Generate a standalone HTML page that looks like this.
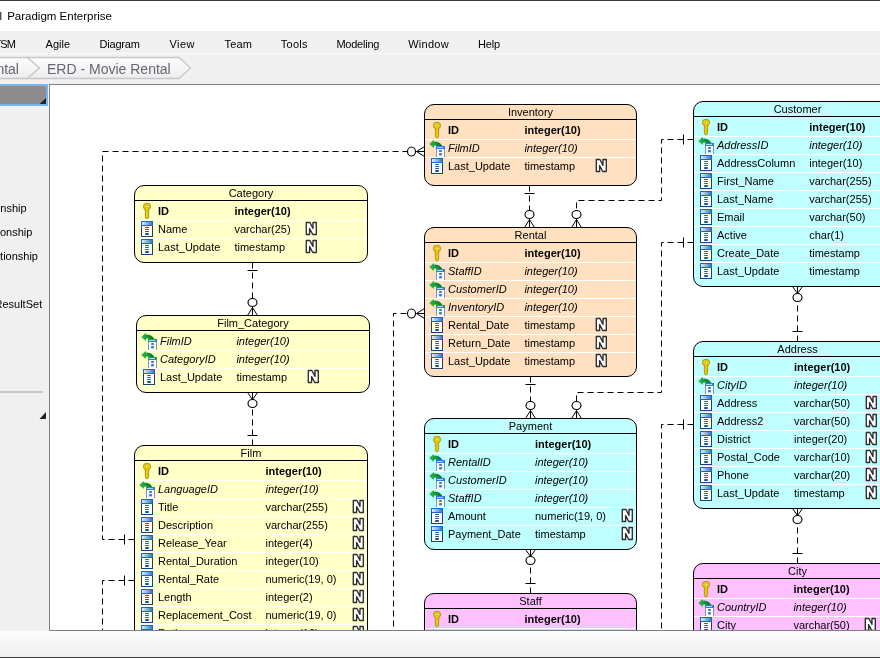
<!DOCTYPE html><html><head><meta charset="utf-8"><style>

*{margin:0;padding:0;box-sizing:content-box}
html,body{width:880px;height:658px;overflow:hidden;background:#fff;font-family:"Liberation Sans", sans-serif}
.tb,svg{will-change:transform}
#top{position:absolute;left:0;top:0;width:880px;height:1px;background:#3c3c3c}
#title{position:absolute;left:0;top:1px;width:880px;height:30px;background:#fff}
#title span{position:absolute;left:-3px;top:8px;font-size:12.5px;color:#000;white-space:nowrap}
#menu{position:absolute;left:0;top:31px;width:880px;height:22px;background:#f0f0f0}
#menu span{position:absolute;top:6px;font-size:11.5px;color:#000;white-space:nowrap}
#crumbbar{position:absolute;left:0;top:53px;width:880px;height:30px;background:#f0f0f0;border-top:1px solid #fafafa}
#left{position:absolute;left:0;top:84px;width:49px;height:547px;background:#f0f0f0}
#canvas{position:absolute;left:49px;top:84px;width:831px;height:545px;border-left:1px solid #7b828a;border-top:1px solid #7b828a;border-bottom:1px solid #7b828a;background:#fff;overflow:hidden}
#status{position:absolute;left:0;top:631px;width:880px;height:26px;background:linear-gradient(#fcfcfc,#f0f0f0)}
#bot{position:absolute;left:0;top:657px;width:880px;height:1px;background:#3c3c3c}
.tb{position:absolute;border:1px solid #000;border-radius:10px;overflow:hidden}
.hd{position:absolute;left:0;top:0;width:100%;height:14px;border-bottom:1px solid #000;text-align:center;font-size:11px;line-height:14px;color:#000}
.sep{position:absolute;left:0;width:100%;height:1px;background:#fff}
.t{position:absolute;font-size:11px;line-height:17px;color:#000;white-space:nowrap}
.t.b{font-weight:bold}
.t.i{font-style:italic}
.ic{position:absolute}
svg.cn{position:absolute;left:0;top:0}
.dl{fill:none;stroke:#000;stroke-width:1;stroke-dasharray:6 4}
.sl{fill:none;stroke:#000;stroke-width:1}
.ci{fill:#fff;stroke:#000;stroke-width:1.15}

</style></head><body>
<svg width="0" height="0" style="position:absolute">
<defs>
<linearGradient id="gold" x1="0" x2="1" y1="0" y2="0"><stop offset="0" stop-color="#f7d84a"/><stop offset="1" stop-color="#e0b000"/></linearGradient>
<linearGradient id="blu" x1="0" x2="1" y1="0" y2="0"><stop offset="0" stop-color="#e2eefa"/><stop offset="1" stop-color="#3a78d0"/></linearGradient>
<linearGradient id="grn" x1="0" x2="1" y1="0" y2="0"><stop offset="0" stop-color="#30c050"/><stop offset="0.6" stop-color="#0e8a30"/><stop offset="1" stop-color="#0a6e26"/></linearGradient>
</defs></svg>
<div id="top"></div><div id="title"></div><div id="menu"></div><div id="crumbbar"></div><div id="left"></div>
<svg style="position:absolute;left:0;top:0" width="880" height="84"><defs><linearGradient id="crg" x1="0" x2="0" y1="0" y2="1"><stop offset="0" stop-color="#fdfdfd"/><stop offset="1" stop-color="#ececec"/></linearGradient></defs><text x="-0.6" y="19.5" font-size="11.5" fill="#000" font-family="Liberation Sans">l</text><text x="7.2" y="19.5" font-size="11.5" fill="#000" font-family="Liberation Sans">Paradigm Enterprise</text><text x="-5.6" y="48" font-size="11" textLength="21.6" fill="#000" font-family="Liberation Sans">TSM</text><text x="45.6" y="48" font-size="11" textLength="24.5" fill="#000" font-family="Liberation Sans">Agile</text><text x="99.6" y="48" font-size="11" textLength="40.2" fill="#000" font-family="Liberation Sans">Diagram</text><text x="169.4" y="48" font-size="11" textLength="25" fill="#000" font-family="Liberation Sans">View</text><text x="224.6" y="48" font-size="11" textLength="27.3" fill="#000" font-family="Liberation Sans">Team</text><text x="280.8" y="48" font-size="11" textLength="26.8" fill="#000" font-family="Liberation Sans">Tools</text><text x="336.4" y="48" font-size="11" textLength="43" fill="#000" font-family="Liberation Sans">Modeling</text><text x="408.2" y="48" font-size="11" textLength="40.4" fill="#000" font-family="Liberation Sans">Window</text><text x="478" y="48" font-size="11" textLength="22" fill="#000" font-family="Liberation Sans">Help</text><path d="M-10,57.5 H27.5 L39.5,68 L27.5,78.5 H-10 Z" fill="url(#crg)" stroke="#c6c8cb" stroke-width="1.3"/><path d="M27.5,57.5 H179 L190.5,68 L179,78.5 H27.5 L39.5,68 Z" fill="url(#crg)" stroke="#c6c8cb" stroke-width="1.3"/><text x="-3.6" y="74" font-size="14" fill="#666676" font-family="Liberation Sans">ntal</text><text x="47" y="74" font-size="14" fill="#666676" font-family="Liberation Sans">ERD - Movie Rental</text></svg><svg style="position:absolute;left:0;top:84px" width="49" height="547"><rect x="0" y="0" width="48" height="22" fill="#78b4f0"/><rect x="0" y="2" width="46" height="18" fill="#8c8c8c"/><path d="M46,14 L46,20 L39.5,20 Z" fill="#222"/><text x="26.6" y="127.6" text-anchor="end" font-size="11" fill="#000" font-family="Liberation Sans">nship</text><text x="32.3" y="152" text-anchor="end" font-size="11" fill="#000" font-family="Liberation Sans">onship</text><text x="38" y="176" text-anchor="end" font-size="11" fill="#000" font-family="Liberation Sans">ationship</text><text x="42.2" y="224" text-anchor="end" font-size="11" fill="#000" font-family="Liberation Sans">ResultSet</text><rect x="0" y="307" width="43" height="2" fill="#c8c8c8"/><path d="M46,328 L46,335 L39.5,335 Z" fill="#222"/></svg>
<div id="canvas">
<svg class="cn" width="831" height="545"><path d="M84.5,454.5 L52.5,454.5 L52.5,66.5 L358.5,66.5" class="dl"/>
<path d="M84.5,495.5 L52.5,495.5 L52.5,555.5" class="dl"/>
<path d="M202.5,177.5 L202.5,215.5" class="dl"/>
<path d="M202.5,360.5 L202.5,322.5" class="dl"/>
<path d="M479.5,100.5 L479.5,127.5" class="dl"/>
<path d="M643.5,54.5 L611.5,54.5 L611.5,115.5 L526.5,115.5 L526.5,127.5" class="dl"/>
<path d="M366.5,228.5 L343.5,228.5 L343.5,555.5" class="dl"/>
<path d="M480.5,291.5 L480.5,318.5" class="dl"/>
<path d="M643.5,157.5 L611.5,157.5 L611.5,307.5 L526.5,307.5 L526.5,318.5" class="dl"/>
<path d="M747.5,256.5 L747.5,216.5" class="dl"/>
<path d="M643.5,339.5 L611.5,339.5 L611.5,555.5" class="dl"/>
<path d="M747.5,478.5 L747.5,438.5" class="dl"/>
<path d="M480.5,508.5 L480.5,479.5" class="dl"/>
<path d="M74.5,449.5 V459.5" class="sl"/>
<path d="M74.5,490.5 V500.5" class="sl"/>
<path d="M197.5,185.5 H207.5" class="sl"/>
<path d="M197.5,350.5 H207.5" class="sl"/>
<path d="M474.5,108.5 H484.5" class="sl"/>
<path d="M633.5,49.5 V59.5" class="sl"/>
<path d="M475.5,299.5 H485.5" class="sl"/>
<path d="M633.5,152.5 V162.5" class="sl"/>
<path d="M742.5,246.5 H752.5" class="sl"/>
<path d="M633.5,334.5 V344.5" class="sl"/>
<path d="M742.5,468.5 H752.5" class="sl"/>
<path d="M475.5,498.5 H485.5" class="sl"/>
<path d="M366.5,66.5 L374.5,61.5 M366.5,66.5 L374.5,71.5 M366.5,66.5 H374.5" class="sl"/>
<ellipse cx="361.5" cy="66.5" rx="4" ry="4.5" class="ci"/>
<path d="M479.5,134.5 L474.5,142.5 M479.5,134.5 L484.5,142.5 M479.5,134.5 V142.5" class="sl"/>
<ellipse cx="479.5" cy="129.5" rx="4.5" ry="4" class="ci"/>
<path d="M526.5,134.5 L521.5,142.5 M526.5,134.5 L531.5,142.5 M526.5,134.5 V142.5" class="sl"/>
<ellipse cx="526.5" cy="129.5" rx="4.5" ry="4" class="ci"/>
<path d="M366.5,228.5 L374.5,223.5 M366.5,228.5 L374.5,233.5 M366.5,228.5 H374.5" class="sl"/>
<ellipse cx="361.5" cy="228.5" rx="4" ry="4.5" class="ci"/>
<path d="M480.5,325.5 L475.5,333.5 M480.5,325.5 L485.5,333.5 M480.5,325.5 V333.5" class="sl"/>
<ellipse cx="480.5" cy="320.5" rx="4.5" ry="4" class="ci"/>
<path d="M526.5,325.5 L521.5,333.5 M526.5,325.5 L531.5,333.5 M526.5,325.5 V333.5" class="sl"/>
<ellipse cx="526.5" cy="320.5" rx="4.5" ry="4" class="ci"/>
<path d="M202.5,222.5 L197.5,230.5 M202.5,222.5 L207.5,230.5 M202.5,222.5 V230.5" class="sl"/>
<ellipse cx="202.5" cy="217.5" rx="4.5" ry="4" class="ci"/>
<path d="M202.5,314.5 L197.5,307.5 M202.5,314.5 L207.5,307.5 M202.5,314.5 V307.5" class="sl"/>
<ellipse cx="202.5" cy="318.5" rx="4.5" ry="4" class="ci"/>
<path d="M747.5,208.5 L742.5,201.5 M747.5,208.5 L752.5,201.5 M747.5,208.5 V201.5" class="sl"/>
<ellipse cx="747.5" cy="212.5" rx="4.5" ry="4" class="ci"/>
<path d="M747.5,430.5 L742.5,423.5 M747.5,430.5 L752.5,423.5 M747.5,430.5 V423.5" class="sl"/>
<ellipse cx="747.5" cy="434.5" rx="4.5" ry="4" class="ci"/>
<path d="M480.5,471.5 L475.5,464.5 M480.5,471.5 L485.5,464.5 M480.5,471.5 V464.5" class="sl"/>
<ellipse cx="480.5" cy="475.5" rx="4.5" ry="4" class="ci"/></svg>
<div class="tb" style="left:374px;top:19px;width:211px;height:80px;background:#ffe0c0">
<div class="hd">Inventory</div>
<svg class="ic" style="left:8px;top:17px" width="9" height="17" viewBox="0 0 9 17"> <path d="M2.3,6.2 L5.7,6.2 L5.6,13.8 L4.8,15.7 L3.2,15.7 L2.4,13.8 Z" fill="#f0c800" stroke="#a08410" stroke-width="0.8"/> <ellipse cx="4" cy="3.5" rx="3.6" ry="3.3" fill="#f6d400" stroke="#a08410" stroke-width="0.9"/> <rect x="3" y="6" width="2" height="1.3" fill="#f0c800"/> <ellipse cx="4" cy="3.3" rx="1.4" ry="1.05" fill="#fff" stroke="#b09018" stroke-width="0.6"/></svg>
<div class="t b" style="left:23px;top:17px">ID</div>
<div class="t b" style="left:99.4px;top:17px">integer(10)</div>
<div class="sep" style="top:34px"></div>
<svg class="ic" style="left:4px;top:34px" width="17" height="18" viewBox="0 0 17 18"> <path d="M0.2,5 L4.8,0.9 L4.8,2.7 Q11,1.7 14.4,9 L11.8,9.2 Q9.4,5.9 4.8,6.7 L4.8,9 Z" fill="url(#grn)"/> <rect x="7" y="7" width="9" height="11" fill="#fff"/> <rect x="7" y="10" width="1" height="8" fill="#8095b5"/> <rect x="15" y="10" width="1" height="8" fill="#8095b5"/> <rect x="7" y="7" width="9" height="3" fill="#2a7ee0"/> <rect x="8" y="8" width="6" height="1" fill="#b8d4f4"/> <rect x="10" y="11" width="3" height="2" rx="0.8" fill="#3a7ec4"/> <rect x="10" y="14" width="3" height="2.5" rx="0.8" fill="#3a7ec4"/></svg>
<div class="t i" style="left:23px;top:35px">FilmID</div>
<div class="t i" style="left:99.4px;top:35px">integer(10)</div>
<div class="sep" style="top:52px"></div>
<svg class="ic" style="left:6px;top:53px" width="12" height="16" viewBox="0 0 12 16"> <rect x="0" y="0" width="12" height="16" fill="#1b3f70"/> <rect x="0" y="0" width="12" height="5" fill="#1466d8"/> <rect x="1" y="1" width="10" height="3" fill="url(#blu)"/> <rect x="1" y="5" width="10" height="10" fill="#fff"/> <rect x="4" y="6" width="4" height="1" rx="0.5" fill="#1a64b0"/> <rect x="4" y="8" width="4" height="1" rx="0.5" fill="#1a64b0"/> <rect x="4" y="10" width="4" height="1" rx="0.5" fill="#1a64b0"/> <rect x="4" y="12" width="4" height="2" rx="1" fill="#0d5498"/></svg>
<div class="t " style="left:23px;top:53px">Last_Update</div>
<div class="t " style="left:99.4px;top:53px">timestamp</div>
<svg class="ic" style="left:170px;top:53px" width="13" height="15" viewBox="0 0 13 15"> <path d="M1.3,1.5 L4.9,1.5 L8,7.4 L8,1.5 L11.3,1.5 L11.3,13.5 L7.8,13.5 L4.6,7.6 L4.6,13.5 L1.3,13.5 Z" fill="#fff" stroke="#2e2e2e" stroke-width="1.35" stroke-linejoin="round"/></svg>
</div>
<div class="tb" style="left:643px;top:16px;width:207px;height:184px;background:#c0ffff">
<div class="hd">Customer</div>
<svg class="ic" style="left:8px;top:17px" width="9" height="17" viewBox="0 0 9 17"> <path d="M2.3,6.2 L5.7,6.2 L5.6,13.8 L4.8,15.7 L3.2,15.7 L2.4,13.8 Z" fill="#f0c800" stroke="#a08410" stroke-width="0.8"/> <ellipse cx="4" cy="3.5" rx="3.6" ry="3.3" fill="#f6d400" stroke="#a08410" stroke-width="0.9"/> <rect x="3" y="6" width="2" height="1.3" fill="#f0c800"/> <ellipse cx="4" cy="3.3" rx="1.4" ry="1.05" fill="#fff" stroke="#b09018" stroke-width="0.6"/></svg>
<div class="t b" style="left:23px;top:17px">ID</div>
<div class="t b" style="left:115.2px;top:17px">integer(10)</div>
<div class="sep" style="top:34px"></div>
<svg class="ic" style="left:4px;top:34px" width="17" height="18" viewBox="0 0 17 18"> <path d="M0.2,5 L4.8,0.9 L4.8,2.7 Q11,1.7 14.4,9 L11.8,9.2 Q9.4,5.9 4.8,6.7 L4.8,9 Z" fill="url(#grn)"/> <rect x="7" y="7" width="9" height="11" fill="#fff"/> <rect x="7" y="10" width="1" height="8" fill="#8095b5"/> <rect x="15" y="10" width="1" height="8" fill="#8095b5"/> <rect x="7" y="7" width="9" height="3" fill="#2a7ee0"/> <rect x="8" y="8" width="6" height="1" fill="#b8d4f4"/> <rect x="10" y="11" width="3" height="2" rx="0.8" fill="#3a7ec4"/> <rect x="10" y="14" width="3" height="2.5" rx="0.8" fill="#3a7ec4"/></svg>
<div class="t i" style="left:23px;top:35px">AddressID</div>
<div class="t i" style="left:115.2px;top:35px">integer(10)</div>
<div class="sep" style="top:52px"></div>
<svg class="ic" style="left:6px;top:53px" width="12" height="16" viewBox="0 0 12 16"> <rect x="0" y="0" width="12" height="16" fill="#1b3f70"/> <rect x="0" y="0" width="12" height="5" fill="#1466d8"/> <rect x="1" y="1" width="10" height="3" fill="url(#blu)"/> <rect x="1" y="5" width="10" height="10" fill="#fff"/> <rect x="4" y="6" width="4" height="1" rx="0.5" fill="#1a64b0"/> <rect x="4" y="8" width="4" height="1" rx="0.5" fill="#1a64b0"/> <rect x="4" y="10" width="4" height="1" rx="0.5" fill="#1a64b0"/> <rect x="4" y="12" width="4" height="2" rx="1" fill="#0d5498"/></svg>
<div class="t " style="left:23px;top:53px">AddressColumn</div>
<div class="t " style="left:115.2px;top:53px">integer(10)</div>
<div class="sep" style="top:70px"></div>
<svg class="ic" style="left:6px;top:71px" width="12" height="16" viewBox="0 0 12 16"> <rect x="0" y="0" width="12" height="16" fill="#1b3f70"/> <rect x="0" y="0" width="12" height="5" fill="#1466d8"/> <rect x="1" y="1" width="10" height="3" fill="url(#blu)"/> <rect x="1" y="5" width="10" height="10" fill="#fff"/> <rect x="4" y="6" width="4" height="1" rx="0.5" fill="#1a64b0"/> <rect x="4" y="8" width="4" height="1" rx="0.5" fill="#1a64b0"/> <rect x="4" y="10" width="4" height="1" rx="0.5" fill="#1a64b0"/> <rect x="4" y="12" width="4" height="2" rx="1" fill="#0d5498"/></svg>
<div class="t " style="left:23px;top:71px">First_Name</div>
<div class="t " style="left:115.2px;top:71px">varchar(255)</div>
<div class="sep" style="top:88px"></div>
<svg class="ic" style="left:6px;top:89px" width="12" height="16" viewBox="0 0 12 16"> <rect x="0" y="0" width="12" height="16" fill="#1b3f70"/> <rect x="0" y="0" width="12" height="5" fill="#1466d8"/> <rect x="1" y="1" width="10" height="3" fill="url(#blu)"/> <rect x="1" y="5" width="10" height="10" fill="#fff"/> <rect x="4" y="6" width="4" height="1" rx="0.5" fill="#1a64b0"/> <rect x="4" y="8" width="4" height="1" rx="0.5" fill="#1a64b0"/> <rect x="4" y="10" width="4" height="1" rx="0.5" fill="#1a64b0"/> <rect x="4" y="12" width="4" height="2" rx="1" fill="#0d5498"/></svg>
<div class="t " style="left:23px;top:89px">Last_Name</div>
<div class="t " style="left:115.2px;top:89px">varchar(255)</div>
<div class="sep" style="top:106px"></div>
<svg class="ic" style="left:6px;top:107px" width="12" height="16" viewBox="0 0 12 16"> <rect x="0" y="0" width="12" height="16" fill="#1b3f70"/> <rect x="0" y="0" width="12" height="5" fill="#1466d8"/> <rect x="1" y="1" width="10" height="3" fill="url(#blu)"/> <rect x="1" y="5" width="10" height="10" fill="#fff"/> <rect x="4" y="6" width="4" height="1" rx="0.5" fill="#1a64b0"/> <rect x="4" y="8" width="4" height="1" rx="0.5" fill="#1a64b0"/> <rect x="4" y="10" width="4" height="1" rx="0.5" fill="#1a64b0"/> <rect x="4" y="12" width="4" height="2" rx="1" fill="#0d5498"/></svg>
<div class="t " style="left:23px;top:107px">Email</div>
<div class="t " style="left:115.2px;top:107px">varchar(50)</div>
<div class="sep" style="top:124px"></div>
<svg class="ic" style="left:6px;top:125px" width="12" height="16" viewBox="0 0 12 16"> <rect x="0" y="0" width="12" height="16" fill="#1b3f70"/> <rect x="0" y="0" width="12" height="5" fill="#1466d8"/> <rect x="1" y="1" width="10" height="3" fill="url(#blu)"/> <rect x="1" y="5" width="10" height="10" fill="#fff"/> <rect x="4" y="6" width="4" height="1" rx="0.5" fill="#1a64b0"/> <rect x="4" y="8" width="4" height="1" rx="0.5" fill="#1a64b0"/> <rect x="4" y="10" width="4" height="1" rx="0.5" fill="#1a64b0"/> <rect x="4" y="12" width="4" height="2" rx="1" fill="#0d5498"/></svg>
<div class="t " style="left:23px;top:125px">Active</div>
<div class="t " style="left:115.2px;top:125px">char(1)</div>
<div class="sep" style="top:142px"></div>
<svg class="ic" style="left:6px;top:143px" width="12" height="16" viewBox="0 0 12 16"> <rect x="0" y="0" width="12" height="16" fill="#1b3f70"/> <rect x="0" y="0" width="12" height="5" fill="#1466d8"/> <rect x="1" y="1" width="10" height="3" fill="url(#blu)"/> <rect x="1" y="5" width="10" height="10" fill="#fff"/> <rect x="4" y="6" width="4" height="1" rx="0.5" fill="#1a64b0"/> <rect x="4" y="8" width="4" height="1" rx="0.5" fill="#1a64b0"/> <rect x="4" y="10" width="4" height="1" rx="0.5" fill="#1a64b0"/> <rect x="4" y="12" width="4" height="2" rx="1" fill="#0d5498"/></svg>
<div class="t " style="left:23px;top:143px">Create_Date</div>
<div class="t " style="left:115.2px;top:143px">timestamp</div>
<div class="sep" style="top:160px"></div>
<svg class="ic" style="left:6px;top:161px" width="12" height="16" viewBox="0 0 12 16"> <rect x="0" y="0" width="12" height="16" fill="#1b3f70"/> <rect x="0" y="0" width="12" height="5" fill="#1466d8"/> <rect x="1" y="1" width="10" height="3" fill="url(#blu)"/> <rect x="1" y="5" width="10" height="10" fill="#fff"/> <rect x="4" y="6" width="4" height="1" rx="0.5" fill="#1a64b0"/> <rect x="4" y="8" width="4" height="1" rx="0.5" fill="#1a64b0"/> <rect x="4" y="10" width="4" height="1" rx="0.5" fill="#1a64b0"/> <rect x="4" y="12" width="4" height="2" rx="1" fill="#0d5498"/></svg>
<div class="t " style="left:23px;top:161px">Last_Update</div>
<div class="t " style="left:115.2px;top:161px">timestamp</div>
</div>
<div class="tb" style="left:84px;top:100px;width:232px;height:76px;background:#ffffc8">
<div class="hd">Category</div>
<svg class="ic" style="left:8px;top:17px" width="9" height="17" viewBox="0 0 9 17"> <path d="M2.3,6.2 L5.7,6.2 L5.6,13.8 L4.8,15.7 L3.2,15.7 L2.4,13.8 Z" fill="#f0c800" stroke="#a08410" stroke-width="0.8"/> <ellipse cx="4" cy="3.5" rx="3.6" ry="3.3" fill="#f6d400" stroke="#a08410" stroke-width="0.9"/> <rect x="3" y="6" width="2" height="1.3" fill="#f0c800"/> <ellipse cx="4" cy="3.3" rx="1.4" ry="1.05" fill="#fff" stroke="#b09018" stroke-width="0.6"/></svg>
<div class="t b" style="left:23px;top:17px">ID</div>
<div class="t b" style="left:99.4px;top:17px">integer(10)</div>
<div class="sep" style="top:34px"></div>
<svg class="ic" style="left:6px;top:35px" width="12" height="16" viewBox="0 0 12 16"> <rect x="0" y="0" width="12" height="16" fill="#1b3f70"/> <rect x="0" y="0" width="12" height="5" fill="#1466d8"/> <rect x="1" y="1" width="10" height="3" fill="url(#blu)"/> <rect x="1" y="5" width="10" height="10" fill="#fff"/> <rect x="4" y="6" width="4" height="1" rx="0.5" fill="#1a64b0"/> <rect x="4" y="8" width="4" height="1" rx="0.5" fill="#1a64b0"/> <rect x="4" y="10" width="4" height="1" rx="0.5" fill="#1a64b0"/> <rect x="4" y="12" width="4" height="2" rx="1" fill="#0d5498"/></svg>
<div class="t " style="left:23px;top:35px">Name</div>
<div class="t " style="left:99.4px;top:35px">varchar(25)</div>
<svg class="ic" style="left:170px;top:35px" width="13" height="15" viewBox="0 0 13 15"> <path d="M1.3,1.5 L4.9,1.5 L8,7.4 L8,1.5 L11.3,1.5 L11.3,13.5 L7.8,13.5 L4.6,7.6 L4.6,13.5 L1.3,13.5 Z" fill="#fff" stroke="#2e2e2e" stroke-width="1.35" stroke-linejoin="round"/></svg>
<div class="sep" style="top:52px"></div>
<svg class="ic" style="left:6px;top:53px" width="12" height="16" viewBox="0 0 12 16"> <rect x="0" y="0" width="12" height="16" fill="#1b3f70"/> <rect x="0" y="0" width="12" height="5" fill="#1466d8"/> <rect x="1" y="1" width="10" height="3" fill="url(#blu)"/> <rect x="1" y="5" width="10" height="10" fill="#fff"/> <rect x="4" y="6" width="4" height="1" rx="0.5" fill="#1a64b0"/> <rect x="4" y="8" width="4" height="1" rx="0.5" fill="#1a64b0"/> <rect x="4" y="10" width="4" height="1" rx="0.5" fill="#1a64b0"/> <rect x="4" y="12" width="4" height="2" rx="1" fill="#0d5498"/></svg>
<div class="t " style="left:23px;top:53px">Last_Update</div>
<div class="t " style="left:99.4px;top:53px">timestamp</div>
<svg class="ic" style="left:170px;top:53px" width="13" height="15" viewBox="0 0 13 15"> <path d="M1.3,1.5 L4.9,1.5 L8,7.4 L8,1.5 L11.3,1.5 L11.3,13.5 L7.8,13.5 L4.6,7.6 L4.6,13.5 L1.3,13.5 Z" fill="#fff" stroke="#2e2e2e" stroke-width="1.35" stroke-linejoin="round"/></svg>
</div>
<div class="tb" style="left:374px;top:142px;width:211px;height:148px;background:#ffe0c0">
<div class="hd">Rental</div>
<svg class="ic" style="left:8px;top:17px" width="9" height="17" viewBox="0 0 9 17"> <path d="M2.3,6.2 L5.7,6.2 L5.6,13.8 L4.8,15.7 L3.2,15.7 L2.4,13.8 Z" fill="#f0c800" stroke="#a08410" stroke-width="0.8"/> <ellipse cx="4" cy="3.5" rx="3.6" ry="3.3" fill="#f6d400" stroke="#a08410" stroke-width="0.9"/> <rect x="3" y="6" width="2" height="1.3" fill="#f0c800"/> <ellipse cx="4" cy="3.3" rx="1.4" ry="1.05" fill="#fff" stroke="#b09018" stroke-width="0.6"/></svg>
<div class="t b" style="left:23px;top:17px">ID</div>
<div class="t b" style="left:99.4px;top:17px">integer(10)</div>
<div class="sep" style="top:34px"></div>
<svg class="ic" style="left:4px;top:34px" width="17" height="18" viewBox="0 0 17 18"> <path d="M0.2,5 L4.8,0.9 L4.8,2.7 Q11,1.7 14.4,9 L11.8,9.2 Q9.4,5.9 4.8,6.7 L4.8,9 Z" fill="url(#grn)"/> <rect x="7" y="7" width="9" height="11" fill="#fff"/> <rect x="7" y="10" width="1" height="8" fill="#8095b5"/> <rect x="15" y="10" width="1" height="8" fill="#8095b5"/> <rect x="7" y="7" width="9" height="3" fill="#2a7ee0"/> <rect x="8" y="8" width="6" height="1" fill="#b8d4f4"/> <rect x="10" y="11" width="3" height="2" rx="0.8" fill="#3a7ec4"/> <rect x="10" y="14" width="3" height="2.5" rx="0.8" fill="#3a7ec4"/></svg>
<div class="t i" style="left:23px;top:35px">StaffID</div>
<div class="t i" style="left:99.4px;top:35px">integer(10)</div>
<div class="sep" style="top:52px"></div>
<svg class="ic" style="left:4px;top:52px" width="17" height="18" viewBox="0 0 17 18"> <path d="M0.2,5 L4.8,0.9 L4.8,2.7 Q11,1.7 14.4,9 L11.8,9.2 Q9.4,5.9 4.8,6.7 L4.8,9 Z" fill="url(#grn)"/> <rect x="7" y="7" width="9" height="11" fill="#fff"/> <rect x="7" y="10" width="1" height="8" fill="#8095b5"/> <rect x="15" y="10" width="1" height="8" fill="#8095b5"/> <rect x="7" y="7" width="9" height="3" fill="#2a7ee0"/> <rect x="8" y="8" width="6" height="1" fill="#b8d4f4"/> <rect x="10" y="11" width="3" height="2" rx="0.8" fill="#3a7ec4"/> <rect x="10" y="14" width="3" height="2.5" rx="0.8" fill="#3a7ec4"/></svg>
<div class="t i" style="left:23px;top:53px">CustomerID</div>
<div class="t i" style="left:99.4px;top:53px">integer(10)</div>
<div class="sep" style="top:70px"></div>
<svg class="ic" style="left:4px;top:70px" width="17" height="18" viewBox="0 0 17 18"> <path d="M0.2,5 L4.8,0.9 L4.8,2.7 Q11,1.7 14.4,9 L11.8,9.2 Q9.4,5.9 4.8,6.7 L4.8,9 Z" fill="url(#grn)"/> <rect x="7" y="7" width="9" height="11" fill="#fff"/> <rect x="7" y="10" width="1" height="8" fill="#8095b5"/> <rect x="15" y="10" width="1" height="8" fill="#8095b5"/> <rect x="7" y="7" width="9" height="3" fill="#2a7ee0"/> <rect x="8" y="8" width="6" height="1" fill="#b8d4f4"/> <rect x="10" y="11" width="3" height="2" rx="0.8" fill="#3a7ec4"/> <rect x="10" y="14" width="3" height="2.5" rx="0.8" fill="#3a7ec4"/></svg>
<div class="t i" style="left:23px;top:71px">InventoryID</div>
<div class="t i" style="left:99.4px;top:71px">integer(10)</div>
<div class="sep" style="top:88px"></div>
<svg class="ic" style="left:6px;top:89px" width="12" height="16" viewBox="0 0 12 16"> <rect x="0" y="0" width="12" height="16" fill="#1b3f70"/> <rect x="0" y="0" width="12" height="5" fill="#1466d8"/> <rect x="1" y="1" width="10" height="3" fill="url(#blu)"/> <rect x="1" y="5" width="10" height="10" fill="#fff"/> <rect x="4" y="6" width="4" height="1" rx="0.5" fill="#1a64b0"/> <rect x="4" y="8" width="4" height="1" rx="0.5" fill="#1a64b0"/> <rect x="4" y="10" width="4" height="1" rx="0.5" fill="#1a64b0"/> <rect x="4" y="12" width="4" height="2" rx="1" fill="#0d5498"/></svg>
<div class="t " style="left:23px;top:89px">Rental_Date</div>
<div class="t " style="left:99.4px;top:89px">timestamp</div>
<svg class="ic" style="left:170px;top:89px" width="13" height="15" viewBox="0 0 13 15"> <path d="M1.3,1.5 L4.9,1.5 L8,7.4 L8,1.5 L11.3,1.5 L11.3,13.5 L7.8,13.5 L4.6,7.6 L4.6,13.5 L1.3,13.5 Z" fill="#fff" stroke="#2e2e2e" stroke-width="1.35" stroke-linejoin="round"/></svg>
<div class="sep" style="top:106px"></div>
<svg class="ic" style="left:6px;top:107px" width="12" height="16" viewBox="0 0 12 16"> <rect x="0" y="0" width="12" height="16" fill="#1b3f70"/> <rect x="0" y="0" width="12" height="5" fill="#1466d8"/> <rect x="1" y="1" width="10" height="3" fill="url(#blu)"/> <rect x="1" y="5" width="10" height="10" fill="#fff"/> <rect x="4" y="6" width="4" height="1" rx="0.5" fill="#1a64b0"/> <rect x="4" y="8" width="4" height="1" rx="0.5" fill="#1a64b0"/> <rect x="4" y="10" width="4" height="1" rx="0.5" fill="#1a64b0"/> <rect x="4" y="12" width="4" height="2" rx="1" fill="#0d5498"/></svg>
<div class="t " style="left:23px;top:107px">Return_Date</div>
<div class="t " style="left:99.4px;top:107px">timestamp</div>
<svg class="ic" style="left:170px;top:107px" width="13" height="15" viewBox="0 0 13 15"> <path d="M1.3,1.5 L4.9,1.5 L8,7.4 L8,1.5 L11.3,1.5 L11.3,13.5 L7.8,13.5 L4.6,7.6 L4.6,13.5 L1.3,13.5 Z" fill="#fff" stroke="#2e2e2e" stroke-width="1.35" stroke-linejoin="round"/></svg>
<div class="sep" style="top:124px"></div>
<svg class="ic" style="left:6px;top:125px" width="12" height="16" viewBox="0 0 12 16"> <rect x="0" y="0" width="12" height="16" fill="#1b3f70"/> <rect x="0" y="0" width="12" height="5" fill="#1466d8"/> <rect x="1" y="1" width="10" height="3" fill="url(#blu)"/> <rect x="1" y="5" width="10" height="10" fill="#fff"/> <rect x="4" y="6" width="4" height="1" rx="0.5" fill="#1a64b0"/> <rect x="4" y="8" width="4" height="1" rx="0.5" fill="#1a64b0"/> <rect x="4" y="10" width="4" height="1" rx="0.5" fill="#1a64b0"/> <rect x="4" y="12" width="4" height="2" rx="1" fill="#0d5498"/></svg>
<div class="t " style="left:23px;top:125px">Last_Update</div>
<div class="t " style="left:99.4px;top:125px">timestamp</div>
<svg class="ic" style="left:170px;top:125px" width="13" height="15" viewBox="0 0 13 15"> <path d="M1.3,1.5 L4.9,1.5 L8,7.4 L8,1.5 L11.3,1.5 L11.3,13.5 L7.8,13.5 L4.6,7.6 L4.6,13.5 L1.3,13.5 Z" fill="#fff" stroke="#2e2e2e" stroke-width="1.35" stroke-linejoin="round"/></svg>
</div>
<div class="tb" style="left:86px;top:230px;width:232px;height:76px;background:#ffffc8">
<div class="hd">Film_Category</div>
<svg class="ic" style="left:4px;top:16px" width="17" height="18" viewBox="0 0 17 18"> <path d="M0.2,5 L4.8,0.9 L4.8,2.7 Q11,1.7 14.4,9 L11.8,9.2 Q9.4,5.9 4.8,6.7 L4.8,9 Z" fill="url(#grn)"/> <rect x="7" y="7" width="9" height="11" fill="#fff"/> <rect x="7" y="10" width="1" height="8" fill="#8095b5"/> <rect x="15" y="10" width="1" height="8" fill="#8095b5"/> <rect x="7" y="7" width="9" height="3" fill="#2a7ee0"/> <rect x="8" y="8" width="6" height="1" fill="#b8d4f4"/> <rect x="10" y="11" width="3" height="2" rx="0.8" fill="#3a7ec4"/> <rect x="10" y="14" width="3" height="2.5" rx="0.8" fill="#3a7ec4"/></svg>
<div class="t i" style="left:23px;top:17px">FilmID</div>
<div class="t i" style="left:99.4px;top:17px">integer(10)</div>
<div class="sep" style="top:34px"></div>
<svg class="ic" style="left:4px;top:34px" width="17" height="18" viewBox="0 0 17 18"> <path d="M0.2,5 L4.8,0.9 L4.8,2.7 Q11,1.7 14.4,9 L11.8,9.2 Q9.4,5.9 4.8,6.7 L4.8,9 Z" fill="url(#grn)"/> <rect x="7" y="7" width="9" height="11" fill="#fff"/> <rect x="7" y="10" width="1" height="8" fill="#8095b5"/> <rect x="15" y="10" width="1" height="8" fill="#8095b5"/> <rect x="7" y="7" width="9" height="3" fill="#2a7ee0"/> <rect x="8" y="8" width="6" height="1" fill="#b8d4f4"/> <rect x="10" y="11" width="3" height="2" rx="0.8" fill="#3a7ec4"/> <rect x="10" y="14" width="3" height="2.5" rx="0.8" fill="#3a7ec4"/></svg>
<div class="t i" style="left:23px;top:35px">CategoryID</div>
<div class="t i" style="left:99.4px;top:35px">integer(10)</div>
<div class="sep" style="top:52px"></div>
<svg class="ic" style="left:6px;top:53px" width="12" height="16" viewBox="0 0 12 16"> <rect x="0" y="0" width="12" height="16" fill="#1b3f70"/> <rect x="0" y="0" width="12" height="5" fill="#1466d8"/> <rect x="1" y="1" width="10" height="3" fill="url(#blu)"/> <rect x="1" y="5" width="10" height="10" fill="#fff"/> <rect x="4" y="6" width="4" height="1" rx="0.5" fill="#1a64b0"/> <rect x="4" y="8" width="4" height="1" rx="0.5" fill="#1a64b0"/> <rect x="4" y="10" width="4" height="1" rx="0.5" fill="#1a64b0"/> <rect x="4" y="12" width="4" height="2" rx="1" fill="#0d5498"/></svg>
<div class="t " style="left:23px;top:53px">Last_Update</div>
<div class="t " style="left:99.4px;top:53px">timestamp</div>
<svg class="ic" style="left:170px;top:53px" width="13" height="15" viewBox="0 0 13 15"> <path d="M1.3,1.5 L4.9,1.5 L8,7.4 L8,1.5 L11.3,1.5 L11.3,13.5 L7.8,13.5 L4.6,7.6 L4.6,13.5 L1.3,13.5 Z" fill="#fff" stroke="#2e2e2e" stroke-width="1.35" stroke-linejoin="round"/></svg>
</div>
<div class="tb" style="left:643px;top:256px;width:207px;height:166px;background:#c0ffff">
<div class="hd">Address</div>
<svg class="ic" style="left:8px;top:17px" width="9" height="17" viewBox="0 0 9 17"> <path d="M2.3,6.2 L5.7,6.2 L5.6,13.8 L4.8,15.7 L3.2,15.7 L2.4,13.8 Z" fill="#f0c800" stroke="#a08410" stroke-width="0.8"/> <ellipse cx="4" cy="3.5" rx="3.6" ry="3.3" fill="#f6d400" stroke="#a08410" stroke-width="0.9"/> <rect x="3" y="6" width="2" height="1.3" fill="#f0c800"/> <ellipse cx="4" cy="3.3" rx="1.4" ry="1.05" fill="#fff" stroke="#b09018" stroke-width="0.6"/></svg>
<div class="t b" style="left:23px;top:17px">ID</div>
<div class="t b" style="left:100.0px;top:17px">integer(10)</div>
<div class="sep" style="top:34px"></div>
<svg class="ic" style="left:4px;top:34px" width="17" height="18" viewBox="0 0 17 18"> <path d="M0.2,5 L4.8,0.9 L4.8,2.7 Q11,1.7 14.4,9 L11.8,9.2 Q9.4,5.9 4.8,6.7 L4.8,9 Z" fill="url(#grn)"/> <rect x="7" y="7" width="9" height="11" fill="#fff"/> <rect x="7" y="10" width="1" height="8" fill="#8095b5"/> <rect x="15" y="10" width="1" height="8" fill="#8095b5"/> <rect x="7" y="7" width="9" height="3" fill="#2a7ee0"/> <rect x="8" y="8" width="6" height="1" fill="#b8d4f4"/> <rect x="10" y="11" width="3" height="2" rx="0.8" fill="#3a7ec4"/> <rect x="10" y="14" width="3" height="2.5" rx="0.8" fill="#3a7ec4"/></svg>
<div class="t i" style="left:23px;top:35px">CityID</div>
<div class="t i" style="left:100.0px;top:35px">integer(10)</div>
<div class="sep" style="top:52px"></div>
<svg class="ic" style="left:6px;top:53px" width="12" height="16" viewBox="0 0 12 16"> <rect x="0" y="0" width="12" height="16" fill="#1b3f70"/> <rect x="0" y="0" width="12" height="5" fill="#1466d8"/> <rect x="1" y="1" width="10" height="3" fill="url(#blu)"/> <rect x="1" y="5" width="10" height="10" fill="#fff"/> <rect x="4" y="6" width="4" height="1" rx="0.5" fill="#1a64b0"/> <rect x="4" y="8" width="4" height="1" rx="0.5" fill="#1a64b0"/> <rect x="4" y="10" width="4" height="1" rx="0.5" fill="#1a64b0"/> <rect x="4" y="12" width="4" height="2" rx="1" fill="#0d5498"/></svg>
<div class="t " style="left:23px;top:53px">Address</div>
<div class="t " style="left:100.0px;top:53px">varchar(50)</div>
<svg class="ic" style="left:171px;top:53px" width="13" height="15" viewBox="0 0 13 15"> <path d="M1.3,1.5 L4.9,1.5 L8,7.4 L8,1.5 L11.3,1.5 L11.3,13.5 L7.8,13.5 L4.6,7.6 L4.6,13.5 L1.3,13.5 Z" fill="#fff" stroke="#2e2e2e" stroke-width="1.35" stroke-linejoin="round"/></svg>
<div class="sep" style="top:70px"></div>
<svg class="ic" style="left:6px;top:71px" width="12" height="16" viewBox="0 0 12 16"> <rect x="0" y="0" width="12" height="16" fill="#1b3f70"/> <rect x="0" y="0" width="12" height="5" fill="#1466d8"/> <rect x="1" y="1" width="10" height="3" fill="url(#blu)"/> <rect x="1" y="5" width="10" height="10" fill="#fff"/> <rect x="4" y="6" width="4" height="1" rx="0.5" fill="#1a64b0"/> <rect x="4" y="8" width="4" height="1" rx="0.5" fill="#1a64b0"/> <rect x="4" y="10" width="4" height="1" rx="0.5" fill="#1a64b0"/> <rect x="4" y="12" width="4" height="2" rx="1" fill="#0d5498"/></svg>
<div class="t " style="left:23px;top:71px">Address2</div>
<div class="t " style="left:100.0px;top:71px">varchar(50)</div>
<svg class="ic" style="left:171px;top:71px" width="13" height="15" viewBox="0 0 13 15"> <path d="M1.3,1.5 L4.9,1.5 L8,7.4 L8,1.5 L11.3,1.5 L11.3,13.5 L7.8,13.5 L4.6,7.6 L4.6,13.5 L1.3,13.5 Z" fill="#fff" stroke="#2e2e2e" stroke-width="1.35" stroke-linejoin="round"/></svg>
<div class="sep" style="top:88px"></div>
<svg class="ic" style="left:6px;top:89px" width="12" height="16" viewBox="0 0 12 16"> <rect x="0" y="0" width="12" height="16" fill="#1b3f70"/> <rect x="0" y="0" width="12" height="5" fill="#1466d8"/> <rect x="1" y="1" width="10" height="3" fill="url(#blu)"/> <rect x="1" y="5" width="10" height="10" fill="#fff"/> <rect x="4" y="6" width="4" height="1" rx="0.5" fill="#1a64b0"/> <rect x="4" y="8" width="4" height="1" rx="0.5" fill="#1a64b0"/> <rect x="4" y="10" width="4" height="1" rx="0.5" fill="#1a64b0"/> <rect x="4" y="12" width="4" height="2" rx="1" fill="#0d5498"/></svg>
<div class="t " style="left:23px;top:89px">District</div>
<div class="t " style="left:100.0px;top:89px">integer(20)</div>
<svg class="ic" style="left:171px;top:89px" width="13" height="15" viewBox="0 0 13 15"> <path d="M1.3,1.5 L4.9,1.5 L8,7.4 L8,1.5 L11.3,1.5 L11.3,13.5 L7.8,13.5 L4.6,7.6 L4.6,13.5 L1.3,13.5 Z" fill="#fff" stroke="#2e2e2e" stroke-width="1.35" stroke-linejoin="round"/></svg>
<div class="sep" style="top:106px"></div>
<svg class="ic" style="left:6px;top:107px" width="12" height="16" viewBox="0 0 12 16"> <rect x="0" y="0" width="12" height="16" fill="#1b3f70"/> <rect x="0" y="0" width="12" height="5" fill="#1466d8"/> <rect x="1" y="1" width="10" height="3" fill="url(#blu)"/> <rect x="1" y="5" width="10" height="10" fill="#fff"/> <rect x="4" y="6" width="4" height="1" rx="0.5" fill="#1a64b0"/> <rect x="4" y="8" width="4" height="1" rx="0.5" fill="#1a64b0"/> <rect x="4" y="10" width="4" height="1" rx="0.5" fill="#1a64b0"/> <rect x="4" y="12" width="4" height="2" rx="1" fill="#0d5498"/></svg>
<div class="t " style="left:23px;top:107px">Postal_Code</div>
<div class="t " style="left:100.0px;top:107px">varchar(10)</div>
<svg class="ic" style="left:171px;top:107px" width="13" height="15" viewBox="0 0 13 15"> <path d="M1.3,1.5 L4.9,1.5 L8,7.4 L8,1.5 L11.3,1.5 L11.3,13.5 L7.8,13.5 L4.6,7.6 L4.6,13.5 L1.3,13.5 Z" fill="#fff" stroke="#2e2e2e" stroke-width="1.35" stroke-linejoin="round"/></svg>
<div class="sep" style="top:124px"></div>
<svg class="ic" style="left:6px;top:125px" width="12" height="16" viewBox="0 0 12 16"> <rect x="0" y="0" width="12" height="16" fill="#1b3f70"/> <rect x="0" y="0" width="12" height="5" fill="#1466d8"/> <rect x="1" y="1" width="10" height="3" fill="url(#blu)"/> <rect x="1" y="5" width="10" height="10" fill="#fff"/> <rect x="4" y="6" width="4" height="1" rx="0.5" fill="#1a64b0"/> <rect x="4" y="8" width="4" height="1" rx="0.5" fill="#1a64b0"/> <rect x="4" y="10" width="4" height="1" rx="0.5" fill="#1a64b0"/> <rect x="4" y="12" width="4" height="2" rx="1" fill="#0d5498"/></svg>
<div class="t " style="left:23px;top:125px">Phone</div>
<div class="t " style="left:100.0px;top:125px">varchar(20)</div>
<svg class="ic" style="left:171px;top:125px" width="13" height="15" viewBox="0 0 13 15"> <path d="M1.3,1.5 L4.9,1.5 L8,7.4 L8,1.5 L11.3,1.5 L11.3,13.5 L7.8,13.5 L4.6,7.6 L4.6,13.5 L1.3,13.5 Z" fill="#fff" stroke="#2e2e2e" stroke-width="1.35" stroke-linejoin="round"/></svg>
<div class="sep" style="top:142px"></div>
<svg class="ic" style="left:6px;top:143px" width="12" height="16" viewBox="0 0 12 16"> <rect x="0" y="0" width="12" height="16" fill="#1b3f70"/> <rect x="0" y="0" width="12" height="5" fill="#1466d8"/> <rect x="1" y="1" width="10" height="3" fill="url(#blu)"/> <rect x="1" y="5" width="10" height="10" fill="#fff"/> <rect x="4" y="6" width="4" height="1" rx="0.5" fill="#1a64b0"/> <rect x="4" y="8" width="4" height="1" rx="0.5" fill="#1a64b0"/> <rect x="4" y="10" width="4" height="1" rx="0.5" fill="#1a64b0"/> <rect x="4" y="12" width="4" height="2" rx="1" fill="#0d5498"/></svg>
<div class="t " style="left:23px;top:143px">Last_Update</div>
<div class="t " style="left:100.0px;top:143px">timestamp</div>
<svg class="ic" style="left:171px;top:143px" width="13" height="15" viewBox="0 0 13 15"> <path d="M1.3,1.5 L4.9,1.5 L8,7.4 L8,1.5 L11.3,1.5 L11.3,13.5 L7.8,13.5 L4.6,7.6 L4.6,13.5 L1.3,13.5 Z" fill="#fff" stroke="#2e2e2e" stroke-width="1.35" stroke-linejoin="round"/></svg>
</div>
<div class="tb" style="left:374px;top:333px;width:211px;height:130px;background:#c0ffff">
<div class="hd">Payment</div>
<svg class="ic" style="left:8px;top:17px" width="9" height="17" viewBox="0 0 9 17"> <path d="M2.3,6.2 L5.7,6.2 L5.6,13.8 L4.8,15.7 L3.2,15.7 L2.4,13.8 Z" fill="#f0c800" stroke="#a08410" stroke-width="0.8"/> <ellipse cx="4" cy="3.5" rx="3.6" ry="3.3" fill="#f6d400" stroke="#a08410" stroke-width="0.9"/> <rect x="3" y="6" width="2" height="1.3" fill="#f0c800"/> <ellipse cx="4" cy="3.3" rx="1.4" ry="1.05" fill="#fff" stroke="#b09018" stroke-width="0.6"/></svg>
<div class="t b" style="left:23px;top:17px">ID</div>
<div class="t b" style="left:110.0px;top:17px">integer(10)</div>
<div class="sep" style="top:34px"></div>
<svg class="ic" style="left:4px;top:34px" width="17" height="18" viewBox="0 0 17 18"> <path d="M0.2,5 L4.8,0.9 L4.8,2.7 Q11,1.7 14.4,9 L11.8,9.2 Q9.4,5.9 4.8,6.7 L4.8,9 Z" fill="url(#grn)"/> <rect x="7" y="7" width="9" height="11" fill="#fff"/> <rect x="7" y="10" width="1" height="8" fill="#8095b5"/> <rect x="15" y="10" width="1" height="8" fill="#8095b5"/> <rect x="7" y="7" width="9" height="3" fill="#2a7ee0"/> <rect x="8" y="8" width="6" height="1" fill="#b8d4f4"/> <rect x="10" y="11" width="3" height="2" rx="0.8" fill="#3a7ec4"/> <rect x="10" y="14" width="3" height="2.5" rx="0.8" fill="#3a7ec4"/></svg>
<div class="t i" style="left:23px;top:35px">RentalID</div>
<div class="t i" style="left:110.0px;top:35px">integer(10)</div>
<div class="sep" style="top:52px"></div>
<svg class="ic" style="left:4px;top:52px" width="17" height="18" viewBox="0 0 17 18"> <path d="M0.2,5 L4.8,0.9 L4.8,2.7 Q11,1.7 14.4,9 L11.8,9.2 Q9.4,5.9 4.8,6.7 L4.8,9 Z" fill="url(#grn)"/> <rect x="7" y="7" width="9" height="11" fill="#fff"/> <rect x="7" y="10" width="1" height="8" fill="#8095b5"/> <rect x="15" y="10" width="1" height="8" fill="#8095b5"/> <rect x="7" y="7" width="9" height="3" fill="#2a7ee0"/> <rect x="8" y="8" width="6" height="1" fill="#b8d4f4"/> <rect x="10" y="11" width="3" height="2" rx="0.8" fill="#3a7ec4"/> <rect x="10" y="14" width="3" height="2.5" rx="0.8" fill="#3a7ec4"/></svg>
<div class="t i" style="left:23px;top:53px">CustomerID</div>
<div class="t i" style="left:110.0px;top:53px">integer(10)</div>
<div class="sep" style="top:70px"></div>
<svg class="ic" style="left:4px;top:70px" width="17" height="18" viewBox="0 0 17 18"> <path d="M0.2,5 L4.8,0.9 L4.8,2.7 Q11,1.7 14.4,9 L11.8,9.2 Q9.4,5.9 4.8,6.7 L4.8,9 Z" fill="url(#grn)"/> <rect x="7" y="7" width="9" height="11" fill="#fff"/> <rect x="7" y="10" width="1" height="8" fill="#8095b5"/> <rect x="15" y="10" width="1" height="8" fill="#8095b5"/> <rect x="7" y="7" width="9" height="3" fill="#2a7ee0"/> <rect x="8" y="8" width="6" height="1" fill="#b8d4f4"/> <rect x="10" y="11" width="3" height="2" rx="0.8" fill="#3a7ec4"/> <rect x="10" y="14" width="3" height="2.5" rx="0.8" fill="#3a7ec4"/></svg>
<div class="t i" style="left:23px;top:71px">StaffID</div>
<div class="t i" style="left:110.0px;top:71px">integer(10)</div>
<div class="sep" style="top:88px"></div>
<svg class="ic" style="left:6px;top:89px" width="12" height="16" viewBox="0 0 12 16"> <rect x="0" y="0" width="12" height="16" fill="#1b3f70"/> <rect x="0" y="0" width="12" height="5" fill="#1466d8"/> <rect x="1" y="1" width="10" height="3" fill="url(#blu)"/> <rect x="1" y="5" width="10" height="10" fill="#fff"/> <rect x="4" y="6" width="4" height="1" rx="0.5" fill="#1a64b0"/> <rect x="4" y="8" width="4" height="1" rx="0.5" fill="#1a64b0"/> <rect x="4" y="10" width="4" height="1" rx="0.5" fill="#1a64b0"/> <rect x="4" y="12" width="4" height="2" rx="1" fill="#0d5498"/></svg>
<div class="t " style="left:23px;top:89px">Amount</div>
<div class="t " style="left:110.0px;top:89px">numeric(19, 0)</div>
<svg class="ic" style="left:196px;top:89px" width="13" height="15" viewBox="0 0 13 15"> <path d="M1.3,1.5 L4.9,1.5 L8,7.4 L8,1.5 L11.3,1.5 L11.3,13.5 L7.8,13.5 L4.6,7.6 L4.6,13.5 L1.3,13.5 Z" fill="#fff" stroke="#2e2e2e" stroke-width="1.35" stroke-linejoin="round"/></svg>
<div class="sep" style="top:106px"></div>
<svg class="ic" style="left:6px;top:107px" width="12" height="16" viewBox="0 0 12 16"> <rect x="0" y="0" width="12" height="16" fill="#1b3f70"/> <rect x="0" y="0" width="12" height="5" fill="#1466d8"/> <rect x="1" y="1" width="10" height="3" fill="url(#blu)"/> <rect x="1" y="5" width="10" height="10" fill="#fff"/> <rect x="4" y="6" width="4" height="1" rx="0.5" fill="#1a64b0"/> <rect x="4" y="8" width="4" height="1" rx="0.5" fill="#1a64b0"/> <rect x="4" y="10" width="4" height="1" rx="0.5" fill="#1a64b0"/> <rect x="4" y="12" width="4" height="2" rx="1" fill="#0d5498"/></svg>
<div class="t " style="left:23px;top:107px">Payment_Date</div>
<div class="t " style="left:110.0px;top:107px">timestamp</div>
<svg class="ic" style="left:196px;top:107px" width="13" height="15" viewBox="0 0 13 15"> <path d="M1.3,1.5 L4.9,1.5 L8,7.4 L8,1.5 L11.3,1.5 L11.3,13.5 L7.8,13.5 L4.6,7.6 L4.6,13.5 L1.3,13.5 Z" fill="#fff" stroke="#2e2e2e" stroke-width="1.35" stroke-linejoin="round"/></svg>
</div>
<div class="tb" style="left:84px;top:360px;width:232px;height:254px;background:#ffffc8">
<div class="hd">Film</div>
<svg class="ic" style="left:8px;top:17px" width="9" height="17" viewBox="0 0 9 17"> <path d="M2.3,6.2 L5.7,6.2 L5.6,13.8 L4.8,15.7 L3.2,15.7 L2.4,13.8 Z" fill="#f0c800" stroke="#a08410" stroke-width="0.8"/> <ellipse cx="4" cy="3.5" rx="3.6" ry="3.3" fill="#f6d400" stroke="#a08410" stroke-width="0.9"/> <rect x="3" y="6" width="2" height="1.3" fill="#f0c800"/> <ellipse cx="4" cy="3.3" rx="1.4" ry="1.05" fill="#fff" stroke="#b09018" stroke-width="0.6"/></svg>
<div class="t b" style="left:23px;top:17px">ID</div>
<div class="t b" style="left:130.5px;top:17px">integer(10)</div>
<div class="sep" style="top:34px"></div>
<svg class="ic" style="left:4px;top:34px" width="17" height="18" viewBox="0 0 17 18"> <path d="M0.2,5 L4.8,0.9 L4.8,2.7 Q11,1.7 14.4,9 L11.8,9.2 Q9.4,5.9 4.8,6.7 L4.8,9 Z" fill="url(#grn)"/> <rect x="7" y="7" width="9" height="11" fill="#fff"/> <rect x="7" y="10" width="1" height="8" fill="#8095b5"/> <rect x="15" y="10" width="1" height="8" fill="#8095b5"/> <rect x="7" y="7" width="9" height="3" fill="#2a7ee0"/> <rect x="8" y="8" width="6" height="1" fill="#b8d4f4"/> <rect x="10" y="11" width="3" height="2" rx="0.8" fill="#3a7ec4"/> <rect x="10" y="14" width="3" height="2.5" rx="0.8" fill="#3a7ec4"/></svg>
<div class="t i" style="left:23px;top:35px">LanguageID</div>
<div class="t i" style="left:130.5px;top:35px">integer(10)</div>
<div class="sep" style="top:52px"></div>
<svg class="ic" style="left:6px;top:53px" width="12" height="16" viewBox="0 0 12 16"> <rect x="0" y="0" width="12" height="16" fill="#1b3f70"/> <rect x="0" y="0" width="12" height="5" fill="#1466d8"/> <rect x="1" y="1" width="10" height="3" fill="url(#blu)"/> <rect x="1" y="5" width="10" height="10" fill="#fff"/> <rect x="4" y="6" width="4" height="1" rx="0.5" fill="#1a64b0"/> <rect x="4" y="8" width="4" height="1" rx="0.5" fill="#1a64b0"/> <rect x="4" y="10" width="4" height="1" rx="0.5" fill="#1a64b0"/> <rect x="4" y="12" width="4" height="2" rx="1" fill="#0d5498"/></svg>
<div class="t " style="left:23px;top:53px">Title</div>
<div class="t " style="left:130.5px;top:53px">varchar(255)</div>
<svg class="ic" style="left:217px;top:53px" width="13" height="15" viewBox="0 0 13 15"> <path d="M1.3,1.5 L4.9,1.5 L8,7.4 L8,1.5 L11.3,1.5 L11.3,13.5 L7.8,13.5 L4.6,7.6 L4.6,13.5 L1.3,13.5 Z" fill="#fff" stroke="#2e2e2e" stroke-width="1.35" stroke-linejoin="round"/></svg>
<div class="sep" style="top:70px"></div>
<svg class="ic" style="left:6px;top:71px" width="12" height="16" viewBox="0 0 12 16"> <rect x="0" y="0" width="12" height="16" fill="#1b3f70"/> <rect x="0" y="0" width="12" height="5" fill="#1466d8"/> <rect x="1" y="1" width="10" height="3" fill="url(#blu)"/> <rect x="1" y="5" width="10" height="10" fill="#fff"/> <rect x="4" y="6" width="4" height="1" rx="0.5" fill="#1a64b0"/> <rect x="4" y="8" width="4" height="1" rx="0.5" fill="#1a64b0"/> <rect x="4" y="10" width="4" height="1" rx="0.5" fill="#1a64b0"/> <rect x="4" y="12" width="4" height="2" rx="1" fill="#0d5498"/></svg>
<div class="t " style="left:23px;top:71px">Description</div>
<div class="t " style="left:130.5px;top:71px">varchar(255)</div>
<svg class="ic" style="left:217px;top:71px" width="13" height="15" viewBox="0 0 13 15"> <path d="M1.3,1.5 L4.9,1.5 L8,7.4 L8,1.5 L11.3,1.5 L11.3,13.5 L7.8,13.5 L4.6,7.6 L4.6,13.5 L1.3,13.5 Z" fill="#fff" stroke="#2e2e2e" stroke-width="1.35" stroke-linejoin="round"/></svg>
<div class="sep" style="top:88px"></div>
<svg class="ic" style="left:6px;top:89px" width="12" height="16" viewBox="0 0 12 16"> <rect x="0" y="0" width="12" height="16" fill="#1b3f70"/> <rect x="0" y="0" width="12" height="5" fill="#1466d8"/> <rect x="1" y="1" width="10" height="3" fill="url(#blu)"/> <rect x="1" y="5" width="10" height="10" fill="#fff"/> <rect x="4" y="6" width="4" height="1" rx="0.5" fill="#1a64b0"/> <rect x="4" y="8" width="4" height="1" rx="0.5" fill="#1a64b0"/> <rect x="4" y="10" width="4" height="1" rx="0.5" fill="#1a64b0"/> <rect x="4" y="12" width="4" height="2" rx="1" fill="#0d5498"/></svg>
<div class="t " style="left:23px;top:89px">Release_Year</div>
<div class="t " style="left:130.5px;top:89px">integer(4)</div>
<svg class="ic" style="left:217px;top:89px" width="13" height="15" viewBox="0 0 13 15"> <path d="M1.3,1.5 L4.9,1.5 L8,7.4 L8,1.5 L11.3,1.5 L11.3,13.5 L7.8,13.5 L4.6,7.6 L4.6,13.5 L1.3,13.5 Z" fill="#fff" stroke="#2e2e2e" stroke-width="1.35" stroke-linejoin="round"/></svg>
<div class="sep" style="top:106px"></div>
<svg class="ic" style="left:6px;top:107px" width="12" height="16" viewBox="0 0 12 16"> <rect x="0" y="0" width="12" height="16" fill="#1b3f70"/> <rect x="0" y="0" width="12" height="5" fill="#1466d8"/> <rect x="1" y="1" width="10" height="3" fill="url(#blu)"/> <rect x="1" y="5" width="10" height="10" fill="#fff"/> <rect x="4" y="6" width="4" height="1" rx="0.5" fill="#1a64b0"/> <rect x="4" y="8" width="4" height="1" rx="0.5" fill="#1a64b0"/> <rect x="4" y="10" width="4" height="1" rx="0.5" fill="#1a64b0"/> <rect x="4" y="12" width="4" height="2" rx="1" fill="#0d5498"/></svg>
<div class="t " style="left:23px;top:107px">Rental_Duration</div>
<div class="t " style="left:130.5px;top:107px">integer(10)</div>
<svg class="ic" style="left:217px;top:107px" width="13" height="15" viewBox="0 0 13 15"> <path d="M1.3,1.5 L4.9,1.5 L8,7.4 L8,1.5 L11.3,1.5 L11.3,13.5 L7.8,13.5 L4.6,7.6 L4.6,13.5 L1.3,13.5 Z" fill="#fff" stroke="#2e2e2e" stroke-width="1.35" stroke-linejoin="round"/></svg>
<div class="sep" style="top:124px"></div>
<svg class="ic" style="left:6px;top:125px" width="12" height="16" viewBox="0 0 12 16"> <rect x="0" y="0" width="12" height="16" fill="#1b3f70"/> <rect x="0" y="0" width="12" height="5" fill="#1466d8"/> <rect x="1" y="1" width="10" height="3" fill="url(#blu)"/> <rect x="1" y="5" width="10" height="10" fill="#fff"/> <rect x="4" y="6" width="4" height="1" rx="0.5" fill="#1a64b0"/> <rect x="4" y="8" width="4" height="1" rx="0.5" fill="#1a64b0"/> <rect x="4" y="10" width="4" height="1" rx="0.5" fill="#1a64b0"/> <rect x="4" y="12" width="4" height="2" rx="1" fill="#0d5498"/></svg>
<div class="t " style="left:23px;top:125px">Rental_Rate</div>
<div class="t " style="left:130.5px;top:125px">numeric(19, 0)</div>
<svg class="ic" style="left:217px;top:125px" width="13" height="15" viewBox="0 0 13 15"> <path d="M1.3,1.5 L4.9,1.5 L8,7.4 L8,1.5 L11.3,1.5 L11.3,13.5 L7.8,13.5 L4.6,7.6 L4.6,13.5 L1.3,13.5 Z" fill="#fff" stroke="#2e2e2e" stroke-width="1.35" stroke-linejoin="round"/></svg>
<div class="sep" style="top:142px"></div>
<svg class="ic" style="left:6px;top:143px" width="12" height="16" viewBox="0 0 12 16"> <rect x="0" y="0" width="12" height="16" fill="#1b3f70"/> <rect x="0" y="0" width="12" height="5" fill="#1466d8"/> <rect x="1" y="1" width="10" height="3" fill="url(#blu)"/> <rect x="1" y="5" width="10" height="10" fill="#fff"/> <rect x="4" y="6" width="4" height="1" rx="0.5" fill="#1a64b0"/> <rect x="4" y="8" width="4" height="1" rx="0.5" fill="#1a64b0"/> <rect x="4" y="10" width="4" height="1" rx="0.5" fill="#1a64b0"/> <rect x="4" y="12" width="4" height="2" rx="1" fill="#0d5498"/></svg>
<div class="t " style="left:23px;top:143px">Length</div>
<div class="t " style="left:130.5px;top:143px">integer(2)</div>
<svg class="ic" style="left:217px;top:143px" width="13" height="15" viewBox="0 0 13 15"> <path d="M1.3,1.5 L4.9,1.5 L8,7.4 L8,1.5 L11.3,1.5 L11.3,13.5 L7.8,13.5 L4.6,7.6 L4.6,13.5 L1.3,13.5 Z" fill="#fff" stroke="#2e2e2e" stroke-width="1.35" stroke-linejoin="round"/></svg>
<div class="sep" style="top:160px"></div>
<svg class="ic" style="left:6px;top:161px" width="12" height="16" viewBox="0 0 12 16"> <rect x="0" y="0" width="12" height="16" fill="#1b3f70"/> <rect x="0" y="0" width="12" height="5" fill="#1466d8"/> <rect x="1" y="1" width="10" height="3" fill="url(#blu)"/> <rect x="1" y="5" width="10" height="10" fill="#fff"/> <rect x="4" y="6" width="4" height="1" rx="0.5" fill="#1a64b0"/> <rect x="4" y="8" width="4" height="1" rx="0.5" fill="#1a64b0"/> <rect x="4" y="10" width="4" height="1" rx="0.5" fill="#1a64b0"/> <rect x="4" y="12" width="4" height="2" rx="1" fill="#0d5498"/></svg>
<div class="t " style="left:23px;top:161px">Replacement_Cost</div>
<div class="t " style="left:130.5px;top:161px">numeric(19, 0)</div>
<svg class="ic" style="left:217px;top:161px" width="13" height="15" viewBox="0 0 13 15"> <path d="M1.3,1.5 L4.9,1.5 L8,7.4 L8,1.5 L11.3,1.5 L11.3,13.5 L7.8,13.5 L4.6,7.6 L4.6,13.5 L1.3,13.5 Z" fill="#fff" stroke="#2e2e2e" stroke-width="1.35" stroke-linejoin="round"/></svg>
<div class="sep" style="top:178px"></div>
<svg class="ic" style="left:6px;top:179px" width="12" height="16" viewBox="0 0 12 16"> <rect x="0" y="0" width="12" height="16" fill="#1b3f70"/> <rect x="0" y="0" width="12" height="5" fill="#1466d8"/> <rect x="1" y="1" width="10" height="3" fill="url(#blu)"/> <rect x="1" y="5" width="10" height="10" fill="#fff"/> <rect x="4" y="6" width="4" height="1" rx="0.5" fill="#1a64b0"/> <rect x="4" y="8" width="4" height="1" rx="0.5" fill="#1a64b0"/> <rect x="4" y="10" width="4" height="1" rx="0.5" fill="#1a64b0"/> <rect x="4" y="12" width="4" height="2" rx="1" fill="#0d5498"/></svg>
<div class="t " style="left:23px;top:179px">Rating</div>
<div class="t " style="left:130.5px;top:179px">integer(10)</div>
<svg class="ic" style="left:217px;top:179px" width="13" height="15" viewBox="0 0 13 15"> <path d="M1.3,1.5 L4.9,1.5 L8,7.4 L8,1.5 L11.3,1.5 L11.3,13.5 L7.8,13.5 L4.6,7.6 L4.6,13.5 L1.3,13.5 Z" fill="#fff" stroke="#2e2e2e" stroke-width="1.35" stroke-linejoin="round"/></svg>
</div>
<div class="tb" style="left:374px;top:508px;width:211px;height:106px;background:#ffc0ff">
<div class="hd">Staff</div>
<svg class="ic" style="left:8px;top:17px" width="9" height="17" viewBox="0 0 9 17"> <path d="M2.3,6.2 L5.7,6.2 L5.6,13.8 L4.8,15.7 L3.2,15.7 L2.4,13.8 Z" fill="#f0c800" stroke="#a08410" stroke-width="0.8"/> <ellipse cx="4" cy="3.5" rx="3.6" ry="3.3" fill="#f6d400" stroke="#a08410" stroke-width="0.9"/> <rect x="3" y="6" width="2" height="1.3" fill="#f0c800"/> <ellipse cx="4" cy="3.3" rx="1.4" ry="1.05" fill="#fff" stroke="#b09018" stroke-width="0.6"/></svg>
<div class="t b" style="left:23px;top:17px">ID</div>
<div class="t b" style="left:99.4px;top:17px">integer(10)</div>
<div class="sep" style="top:34px"></div>
<svg class="ic" style="left:4px;top:34px" width="17" height="18" viewBox="0 0 17 18"> <path d="M0.2,5 L4.8,0.9 L4.8,2.7 Q11,1.7 14.4,9 L11.8,9.2 Q9.4,5.9 4.8,6.7 L4.8,9 Z" fill="url(#grn)"/> <rect x="7" y="7" width="9" height="11" fill="#fff"/> <rect x="7" y="10" width="1" height="8" fill="#8095b5"/> <rect x="15" y="10" width="1" height="8" fill="#8095b5"/> <rect x="7" y="7" width="9" height="3" fill="#2a7ee0"/> <rect x="8" y="8" width="6" height="1" fill="#b8d4f4"/> <rect x="10" y="11" width="3" height="2" rx="0.8" fill="#3a7ec4"/> <rect x="10" y="14" width="3" height="2.5" rx="0.8" fill="#3a7ec4"/></svg>
<div class="t i" style="left:23px;top:35px">AddressID</div>
<div class="t i" style="left:99.4px;top:35px">integer(10)</div>
<div class="sep" style="top:52px"></div>
<svg class="ic" style="left:6px;top:53px" width="12" height="16" viewBox="0 0 12 16"> <rect x="0" y="0" width="12" height="16" fill="#1b3f70"/> <rect x="0" y="0" width="12" height="5" fill="#1466d8"/> <rect x="1" y="1" width="10" height="3" fill="url(#blu)"/> <rect x="1" y="5" width="10" height="10" fill="#fff"/> <rect x="4" y="6" width="4" height="1" rx="0.5" fill="#1a64b0"/> <rect x="4" y="8" width="4" height="1" rx="0.5" fill="#1a64b0"/> <rect x="4" y="10" width="4" height="1" rx="0.5" fill="#1a64b0"/> <rect x="4" y="12" width="4" height="2" rx="1" fill="#0d5498"/></svg>
<div class="t " style="left:23px;top:53px">First_Name</div>
<div class="t " style="left:99.4px;top:53px">varchar(45)</div>
<svg class="ic" style="left:170px;top:53px" width="13" height="15" viewBox="0 0 13 15"> <path d="M1.3,1.5 L4.9,1.5 L8,7.4 L8,1.5 L11.3,1.5 L11.3,13.5 L7.8,13.5 L4.6,7.6 L4.6,13.5 L1.3,13.5 Z" fill="#fff" stroke="#2e2e2e" stroke-width="1.35" stroke-linejoin="round"/></svg>
</div>
<div class="tb" style="left:643px;top:478px;width:207px;height:136px;background:#ffc0ff">
<div class="hd">City</div>
<svg class="ic" style="left:8px;top:17px" width="9" height="17" viewBox="0 0 9 17"> <path d="M2.3,6.2 L5.7,6.2 L5.6,13.8 L4.8,15.7 L3.2,15.7 L2.4,13.8 Z" fill="#f0c800" stroke="#a08410" stroke-width="0.8"/> <ellipse cx="4" cy="3.5" rx="3.6" ry="3.3" fill="#f6d400" stroke="#a08410" stroke-width="0.9"/> <rect x="3" y="6" width="2" height="1.3" fill="#f0c800"/> <ellipse cx="4" cy="3.3" rx="1.4" ry="1.05" fill="#fff" stroke="#b09018" stroke-width="0.6"/></svg>
<div class="t b" style="left:23px;top:17px">ID</div>
<div class="t b" style="left:99.4px;top:17px">integer(10)</div>
<div class="sep" style="top:34px"></div>
<svg class="ic" style="left:4px;top:34px" width="17" height="18" viewBox="0 0 17 18"> <path d="M0.2,5 L4.8,0.9 L4.8,2.7 Q11,1.7 14.4,9 L11.8,9.2 Q9.4,5.9 4.8,6.7 L4.8,9 Z" fill="url(#grn)"/> <rect x="7" y="7" width="9" height="11" fill="#fff"/> <rect x="7" y="10" width="1" height="8" fill="#8095b5"/> <rect x="15" y="10" width="1" height="8" fill="#8095b5"/> <rect x="7" y="7" width="9" height="3" fill="#2a7ee0"/> <rect x="8" y="8" width="6" height="1" fill="#b8d4f4"/> <rect x="10" y="11" width="3" height="2" rx="0.8" fill="#3a7ec4"/> <rect x="10" y="14" width="3" height="2.5" rx="0.8" fill="#3a7ec4"/></svg>
<div class="t i" style="left:23px;top:35px">CountryID</div>
<div class="t i" style="left:99.4px;top:35px">integer(10)</div>
<div class="sep" style="top:52px"></div>
<svg class="ic" style="left:6px;top:53px" width="12" height="16" viewBox="0 0 12 16"> <rect x="0" y="0" width="12" height="16" fill="#1b3f70"/> <rect x="0" y="0" width="12" height="5" fill="#1466d8"/> <rect x="1" y="1" width="10" height="3" fill="url(#blu)"/> <rect x="1" y="5" width="10" height="10" fill="#fff"/> <rect x="4" y="6" width="4" height="1" rx="0.5" fill="#1a64b0"/> <rect x="4" y="8" width="4" height="1" rx="0.5" fill="#1a64b0"/> <rect x="4" y="10" width="4" height="1" rx="0.5" fill="#1a64b0"/> <rect x="4" y="12" width="4" height="2" rx="1" fill="#0d5498"/></svg>
<div class="t " style="left:23px;top:53px">City</div>
<div class="t " style="left:99.4px;top:53px">varchar(50)</div>
<svg class="ic" style="left:170px;top:53px" width="13" height="15" viewBox="0 0 13 15"> <path d="M1.3,1.5 L4.9,1.5 L8,7.4 L8,1.5 L11.3,1.5 L11.3,13.5 L7.8,13.5 L4.6,7.6 L4.6,13.5 L1.3,13.5 Z" fill="#fff" stroke="#2e2e2e" stroke-width="1.35" stroke-linejoin="round"/></svg>
<div class="sep" style="top:70px"></div>
<svg class="ic" style="left:6px;top:71px" width="12" height="16" viewBox="0 0 12 16"> <rect x="0" y="0" width="12" height="16" fill="#1b3f70"/> <rect x="0" y="0" width="12" height="5" fill="#1466d8"/> <rect x="1" y="1" width="10" height="3" fill="url(#blu)"/> <rect x="1" y="5" width="10" height="10" fill="#fff"/> <rect x="4" y="6" width="4" height="1" rx="0.5" fill="#1a64b0"/> <rect x="4" y="8" width="4" height="1" rx="0.5" fill="#1a64b0"/> <rect x="4" y="10" width="4" height="1" rx="0.5" fill="#1a64b0"/> <rect x="4" y="12" width="4" height="2" rx="1" fill="#0d5498"/></svg>
<div class="t " style="left:23px;top:71px">Last_Update</div>
<div class="t " style="left:99.4px;top:71px">timestamp</div>
<svg class="ic" style="left:170px;top:71px" width="13" height="15" viewBox="0 0 13 15"> <path d="M1.3,1.5 L4.9,1.5 L8,7.4 L8,1.5 L11.3,1.5 L11.3,13.5 L7.8,13.5 L4.6,7.6 L4.6,13.5 L1.3,13.5 Z" fill="#fff" stroke="#2e2e2e" stroke-width="1.35" stroke-linejoin="round"/></svg>
</div>
</div>
<div id="status"></div><div id="bot"></div>
</body></html>
